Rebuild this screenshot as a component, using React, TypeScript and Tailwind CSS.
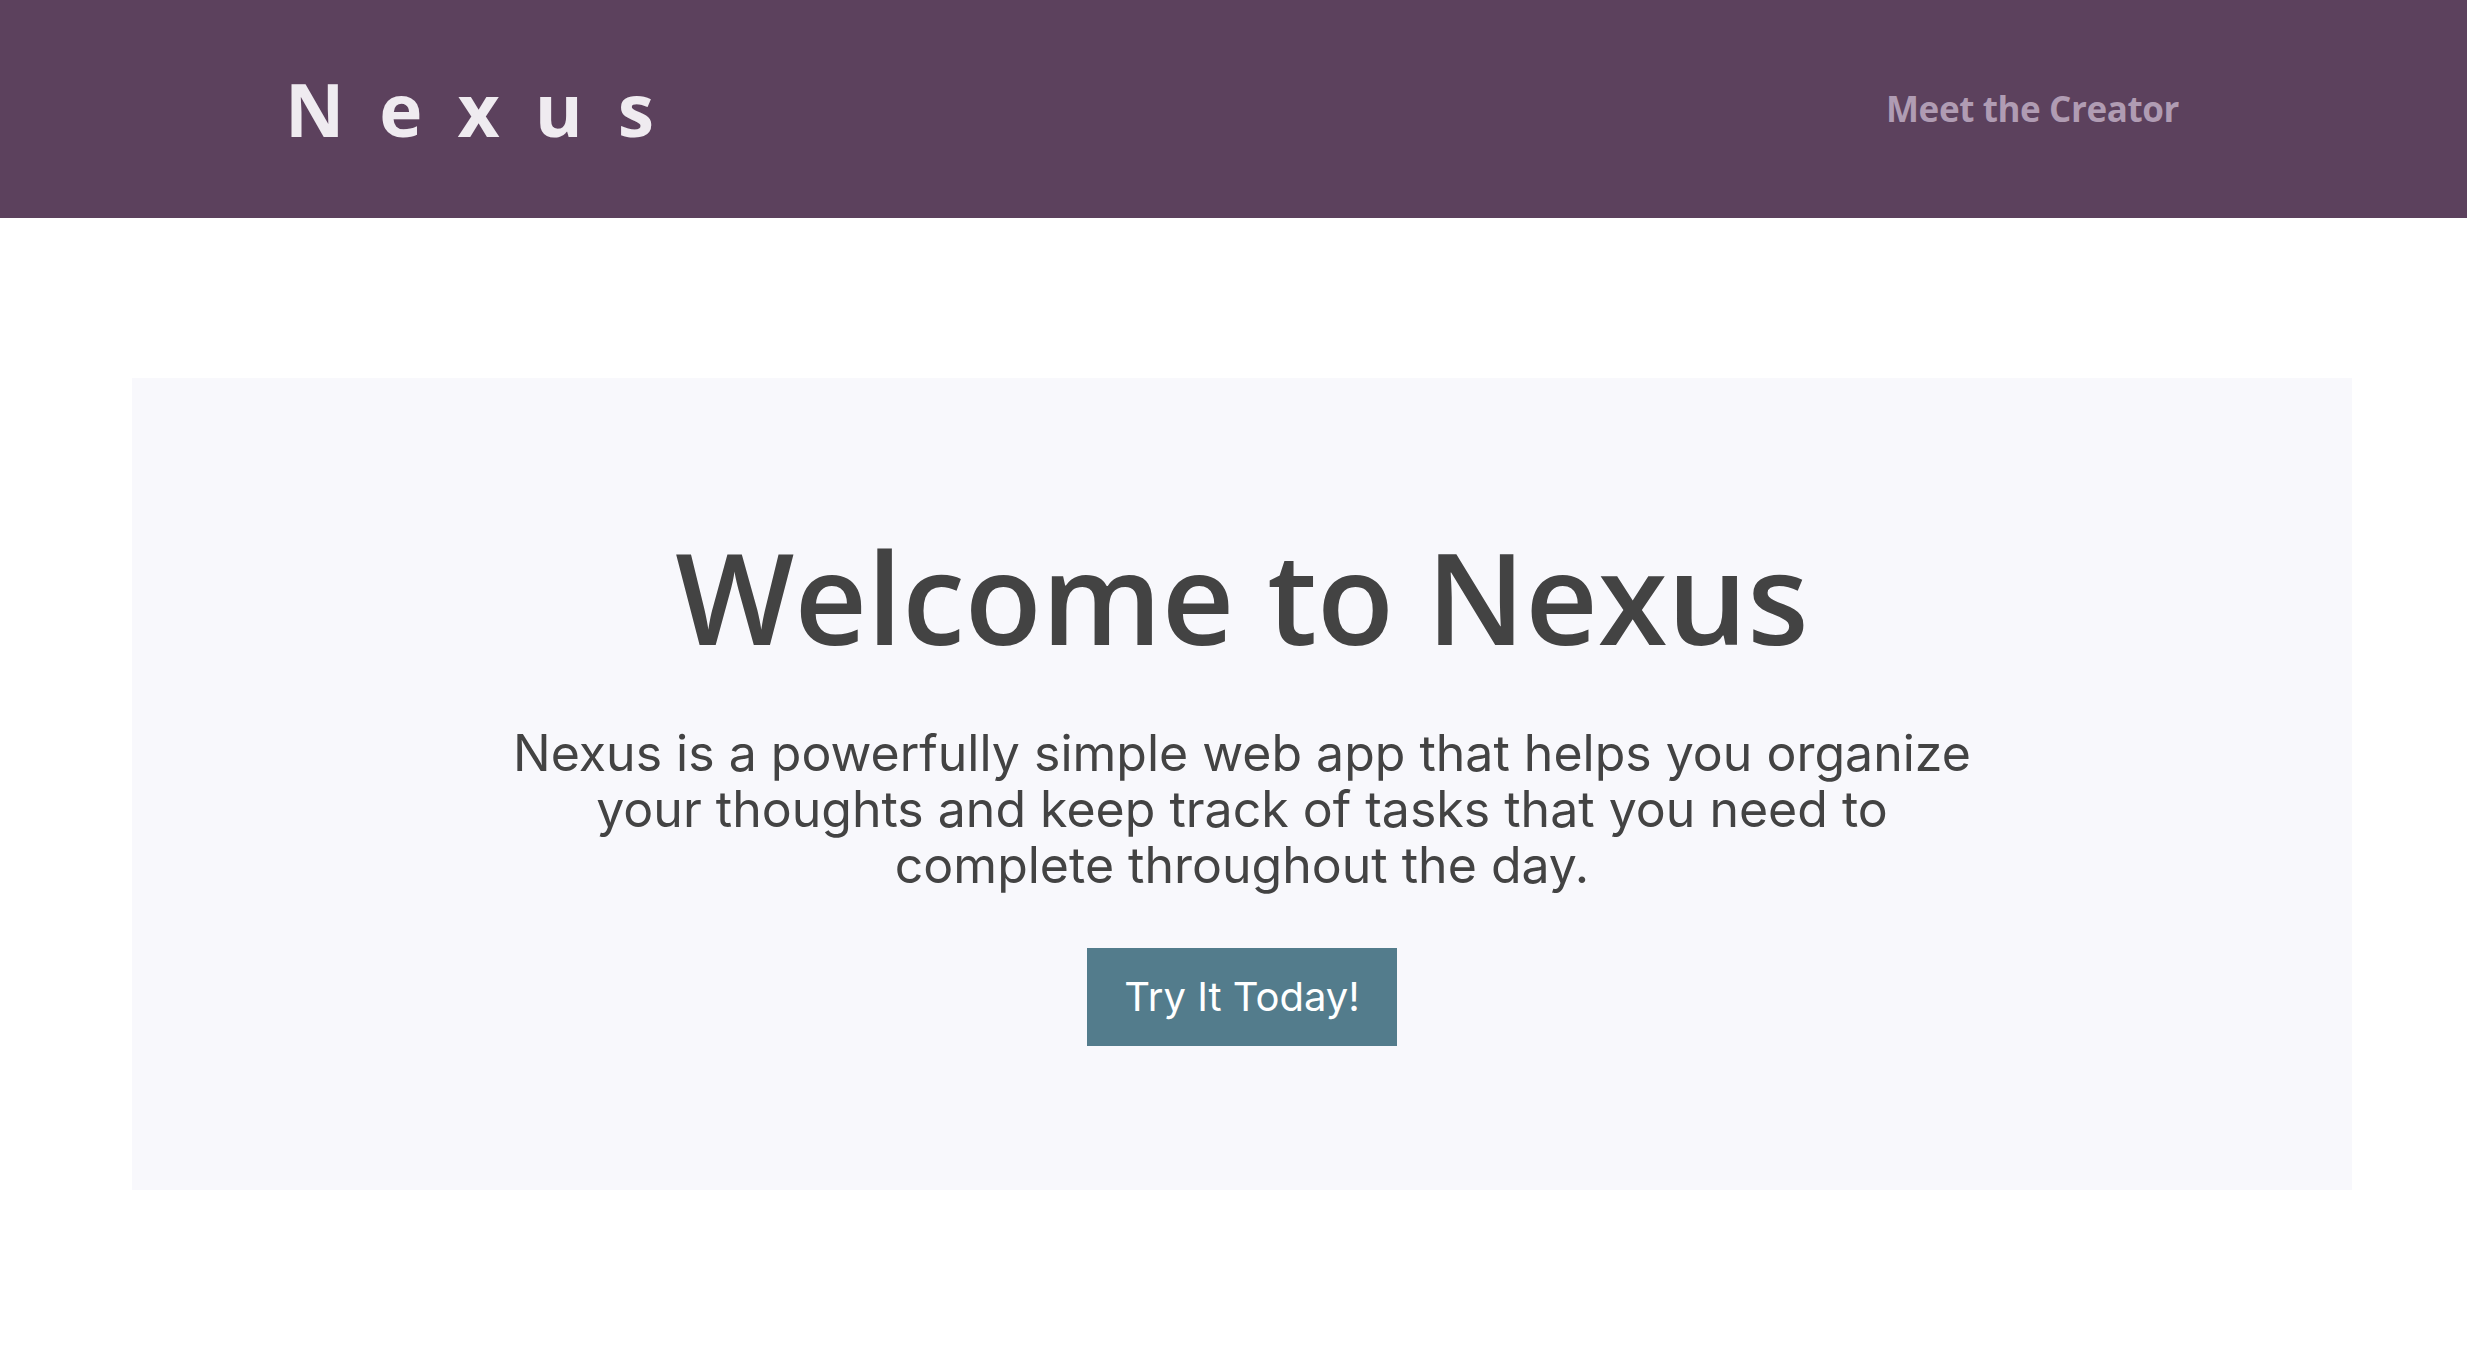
import React from "react";

export default function App() {
  return (
    <div className="min-h-[1372px] w-full bg-white">
      <header className="flex h-[218px] items-center justify-between bg-[#5c415d] pl-[285px] pr-[288px] font-['Open_Sans',sans-serif]">
        <div className="text-[73px] font-bold leading-[74px] tracking-[35px] text-[#efebf0]">
          Nexus
        </div>
        <a
          href="#"
          className="text-[35px] font-bold leading-[36px] tracking-[-0.4px] text-[#b09cb3]"
        >
          Meet the Creator
        </a>
      </header>

      <main className="pt-[160px]">
        <section className="ml-[132px] flex w-[2220px] flex-col items-center bg-[#f8f8fc] pb-[144px] pt-[154px]">
          <h1 className="font-['Open_Sans',sans-serif] text-[126px] font-semibold leading-[128px] text-[#434343]">
            Welcome to Nexus
          </h1>
          <p className="mt-[65px] text-center font-['Inter',sans-serif] text-[50px] leading-[56px] text-[#434343]">
            Nexus is a powerfully simple web app that helps you organize
            <br />
            your thoughts and keep track of tasks that you need to
            <br />
            complete throughout the day.
          </p>
          <button className="mt-[55px] flex h-[98px] w-[310px] items-center justify-center bg-[#537c8c] font-['Inter',sans-serif] text-[40px] leading-[40px] text-white">
            Try It Today!
          </button>
        </section>
      </main>
    </div>
  );
}
